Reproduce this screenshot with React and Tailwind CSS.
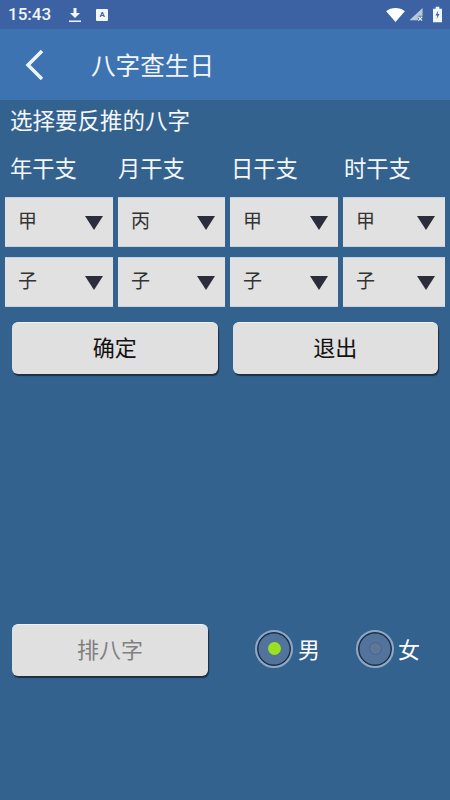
import React from 'react';

function Select({ v }) {
  return (
    <div className="h-[50px] bg-[#e1e1e1] border-t border-b border-[#c5d3e0] flex items-center justify-between pl-[13px] pr-[10px] text-[#333] text-[19px] leading-none">
      <span className="pb-[5px]">{v}</span>
      <svg className="mt-[1px]" width="18" height="14" viewBox="0 0 18 14"><path d="M0 0 H18 L9 14 Z" fill="#2b2d3a" /></svg>
    </div>
  );
}

function Btn({ children, className = '' }) {
  return (
    <button className={`h-[52px] rounded-[6px] bg-[#e0e0e0] border-t border-[#eef0f2] shadow-[1px_2px_1px_#1e2f42] flex items-center justify-center text-[22px] leading-none ${className}`}>
      <span className="pb-[6px]">{children}</span>
    </button>
  );
}

function Radio({ on }) {
  return (
    <div className="w-[38px] h-[38px] rounded-full border-2 border-[#8fa8c2] bg-[#52739b] flex items-center justify-center shadow-[inset_0_0_0_1.5px_#1c2f48]">
      <div className={on
        ? 'w-[13px] h-[13px] rounded-full bg-[#9ce01f]'
        : 'w-[13px] h-[13px] rounded-full bg-[#5f7797] border border-[#4c6484]'} />
    </div>
  );
}

export default function App() {
  return (
    <div className="w-[450px] h-[800px] bg-[#34628f] text-white flex flex-col overflow-hidden" style={{ fontFamily: '"Noto Sans CJK SC", "Noto Sans", sans-serif' }}>
      <div className="h-[29px] bg-[#3c62a3] flex items-center pl-[8px] pr-[8px] shrink-0">
        <span className="text-[17px] leading-none font-['Roboto'] font-medium text-[#f2f5fa]">15:43</span>
        <svg className="ml-[17px]" width="14" height="16" viewBox="0 0 14 16"><path d="M5.5 1 H8.5 V6 H12 L7 11 L2 6 H5.5 Z M1 13.5 H13 V15 H1 Z" fill="#f2f5fa" /></svg>
        <div className="ml-[14px] w-[12px] h-[12px] bg-[#f2f5fa] rounded-[1px] flex items-center justify-center text-[8px] font-bold text-[#3c62a3] leading-none font-['Roboto']">A</div>
        <div className="ml-auto flex items-center">
          <svg width="19" height="14" viewBox="0 0 20 15"><path d="M0 3.5 C5.5 -1 14.5 -1 20 3.5 L10 15 Z" fill="#fff" /></svg>
          <svg className="ml-[3px]" width="16" height="15" viewBox="0 0 16 16"><path d="M15 1 V9 H10 V14 H1 Z" fill="#b9c7dd" /><path d="M10 9 L15 9 V10 H10 Z" fill="#b9c7dd" /><path d="M10.5 10.5 L14.5 14.5 M14.5 10.5 L10.5 14.5" stroke="#f2f5fa" strokeWidth="1.4" /></svg>
          <svg className="ml-[9px]" width="9" height="17" viewBox="0 0 10 17"><path d="M3 0 H7 V2 H10 V17 H0 V2 H3 Z" fill="#f2f5fa" /><path d="M5.8 4 L2.8 9.5 H4.8 L4.2 13.5 L7.2 8 H5.2 Z" fill="#3c62a3" /></svg>
        </div>
      </div>
      <div className="h-[71px] bg-[#3e73b2] flex items-center shrink-0">
        <svg className="ml-[24px]" width="22" height="32" viewBox="0 0 22 32"><path d="M18 2 L4 16 L18 30" fill="none" stroke="#eef3f9" strokeWidth="3.5" /></svg>
        <span className="ml-[45px] text-[24.6px] leading-none text-[#f2f6fb]">八字查生日</span>
      </div>
      <div className="pl-[10px] mt-[5px] h-[28px] flex items-center text-[22.5px] leading-none text-[#f4f7fa]">选择要反推的八字</div>
      <div className="flex mt-[20px] h-[28px] items-center text-[22.3px] leading-none text-[#f4f7fa]">
        <span className="ml-[10px] w-[108px]">年干支</span>
        <span className="w-[113px]">月干支</span>
        <span className="w-[113px]">日干支</span>
        <span>时干支</span>
      </div>
      <div className="grid grid-cols-[108px_107px_108px_102px] gap-x-[5px] gap-y-[10px] mt-[16px] pl-[5px]">
        {['甲', '丙', '甲', '甲', '子', '子', '子', '子'].map((v, i) => <Select key={i} v={v} />)}
      </div>
      <div className="flex gap-[15px] mt-[15px] pl-[12px] pr-[12px]">
        <Btn className="flex-1 text-[#111]">确定</Btn>
        <Btn className="flex-1 text-[#111]">退出</Btn>
      </div>
      <div className="flex items-center mt-[250px] pl-[12px]">
        <Btn className="w-[196px] text-[#808080]">排八字</Btn>
        <div className="ml-[47px] flex items-center pb-[3px]">
          <Radio on />
          <span className="ml-[5px] text-[22px] leading-none pb-[1px]">男</span>
        </div>
        <div className="ml-[36px] flex items-center pb-[3px]">
          <Radio />
          <span className="ml-[4px] text-[22px] leading-none pb-[1px]">女</span>
        </div>
      </div>
    </div>
  );
}
